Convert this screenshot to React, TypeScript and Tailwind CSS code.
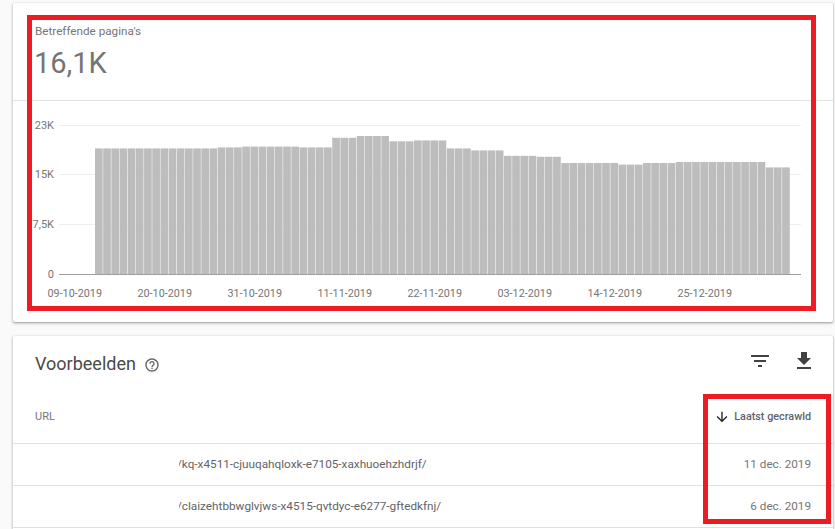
import React from 'react';

// [bars in run, top y of bar]
const RUNS: [number, number][] = [
  [15, 148.4], [3, 147.4], [7, 146.6], [4, 147.4], [3, 137.8], [4, 136], [3, 141.3], [4, 140.4],
  [3, 148.4], [4, 150.4], [4, 155.8], [3, 156.8], [7, 163], [3, 164.6], [4, 163], [11, 162], [3, 167.4],
];

const BASE_Y = 274;
const BAR_STEP = 8.18;

const bars: { x: number; top: number }[] = [];
RUNS.forEach(([count, top]) => {
  for (let i = 0; i < count; i++) bars.push({ x: 95 + bars.length * BAR_STEP, top });
});

const Y_TICKS = [
  { label: '23K', y: 125.5 },
  { label: '15K', y: 174.5 },
  { label: '7,5K', y: 224.5 },
];

const X_LABELS = ['09-10-2019', '20-10-2019', '31-10-2019', '11-11-2019', '22-11-2019', '03-12-2019', '14-12-2019', '25-12-2019'];

function Chart() {
  return (
    <svg viewBox="13 101 820 221" className="block w-[820px] h-[221px]">
      {Y_TICKS.map(t => (
        <g key={t.label}>
          <line x1={59} x2={801} y1={t.y} y2={t.y} stroke="#eeeeee" strokeWidth={1} />
          <text x={54} y={t.y + 3.5} textAnchor="end" fontSize={11} fill="#757575">{t.label}</text>
        </g>
      ))}
      {bars.map(b => (
        <rect key={b.x} x={b.x} y={b.top} width={BAR_STEP - 0.5} height={BASE_Y - b.top} fill="#bdbdbd" />
      ))}
      <line x1={59} x2={801} y1={274.5} y2={274.5} stroke="#9e9e9e" strokeWidth={1} />
      <text x={54} y={278} textAnchor="end" fontSize={11} fill="#757575">0</text>
      {X_LABELS.map((label, i) => (
        <text key={label} x={74.7 + i * 90} y={297} textAnchor="middle" fontSize={10.8} fill="#757575">{label}</text>
      ))}
    </svg>
  );
}

function UrlRow({ url, date }: { url: string; date: string }) {
  return (
    <div className="flex items-center h-[42px] border-b border-[#e0e0e0] pr-[22px]">
      <div className="ml-[166px] w-[400px] overflow-hidden">
        <div className="-ml-[2px] text-[11.75px] text-[#5f6368] whitespace-nowrap">{url}</div>
      </div>
      <div className="ml-auto text-[11.7px] text-[#757575]">{date}</div>
    </div>
  );
}

export default function App() {
  return (
    <div className="relative h-[529px] overflow-hidden bg-[#fafafa] pl-[13px] pr-[2px] pt-[3px] font-['Roboto',sans-serif]">
      <section className="bg-white rounded-[2px] shadow-[0_1px_2px_rgba(60,64,67,0.4),0_1px_3px_1px_rgba(60,64,67,0.12)]">
        <div className="h-[98px] border-b border-[#e0e0e0] pl-[22px] pt-[20px]">
          <div className="text-[11.7px] leading-[16px] text-[#757575]">Betreffende pagina's</div>
          <div className="mt-[6px] -ml-[1px] text-[29px] leading-[36px] text-[#757575]">16,1K</div>
        </div>
        <Chart />
      </section>

      <section className="mt-[14px] pb-[20px] bg-white rounded-[2px] shadow-[0_1px_2px_rgba(60,64,67,0.4),0_1px_3px_1px_rgba(60,64,67,0.12)]">
        <div className="flex items-center h-[50px] pl-[22px] pr-[17px]">
          <h2 className="mt-[5px] text-[18px] text-[#4a4a4a] font-normal">Voorbeelden</h2>
          <svg viewBox="0 0 24 24" className="ml-[8px] mt-[8px] w-[16px] h-[16px]" fill="#616161">
            <path d="M11 18h2v-2h-2v2zm1-16C6.48 2 2 6.48 2 12s4.48 10 10 10 10-4.48 10-10S17.52 2 12 2zm0 18c-4.41 0-8-3.59-8-8s3.59-8 8-8 8 3.59 8 8-3.59 8-8 8zm0-14c-2.21 0-4 1.79-4 4h2c0-1.1.9-2 2-2s2 .9 2 2c0 2-3 1.75-3 5h2c0-2.25 3-2.5 3-5 0-2.21-1.79-4-4-4z" />
          </svg>
          <svg viewBox="0 0 24 24" className="ml-auto w-[24px] h-[24px]" fill="#424242">
            <path d="M10 18h4v-2h-4v2zM3 6v2h18V6H3zm3 7h12v-2H6v2z" />
          </svg>
          <svg viewBox="0 0 24 24" className="ml-[20px] w-[24px] h-[24px]" fill="#424242">
            <path d="M19 9h-4V3H9v6H5l7 7 7-7zM5 18v2h14v-2H5z" />
          </svg>
        </div>
        <div className="flex items-center h-[58px] border-b border-[#e0e0e0] pl-[22px] pr-[22px]">
          <span className="mt-[6px] text-[11px] text-[#757575]">URL</span>
          <svg viewBox="0 0 24 24" className="mt-[5px] ml-auto w-[16px] h-[16px]" fill="#212121">
            <path d="M20 12l-1.41-1.41L13 16.17V4h-2v12.17l-5.58-5.59L4 12l8 8 8-8z" />
          </svg>
          <span className="mt-[6px] ml-[4px] text-[10.8px] font-medium text-[#5f6368]">Laatst gecrawld</span>
        </div>
        <UrlRow url="/kq-x4511-cjuuqahqloxk-e7105-xaxhuoehzhdrjf/" date="11 dec. 2019" />
        <UrlRow url="/claizehtbbwglvjws-x4515-qvtdyc-e6277-gftedkfnj/" date="6 dec. 2019" />
      </section>

      {/* red annotation boxes drawn over the screenshot */}
      <div className="absolute left-[27px] top-[15px] w-[789px] h-[296px] border-[5px] border-[#ed1c24]" />
      <div className="absolute left-[703px] top-[394px] w-[128px] h-[130px] border-[5px] border-[#ed1c24]" />
    </div>
  );
}
